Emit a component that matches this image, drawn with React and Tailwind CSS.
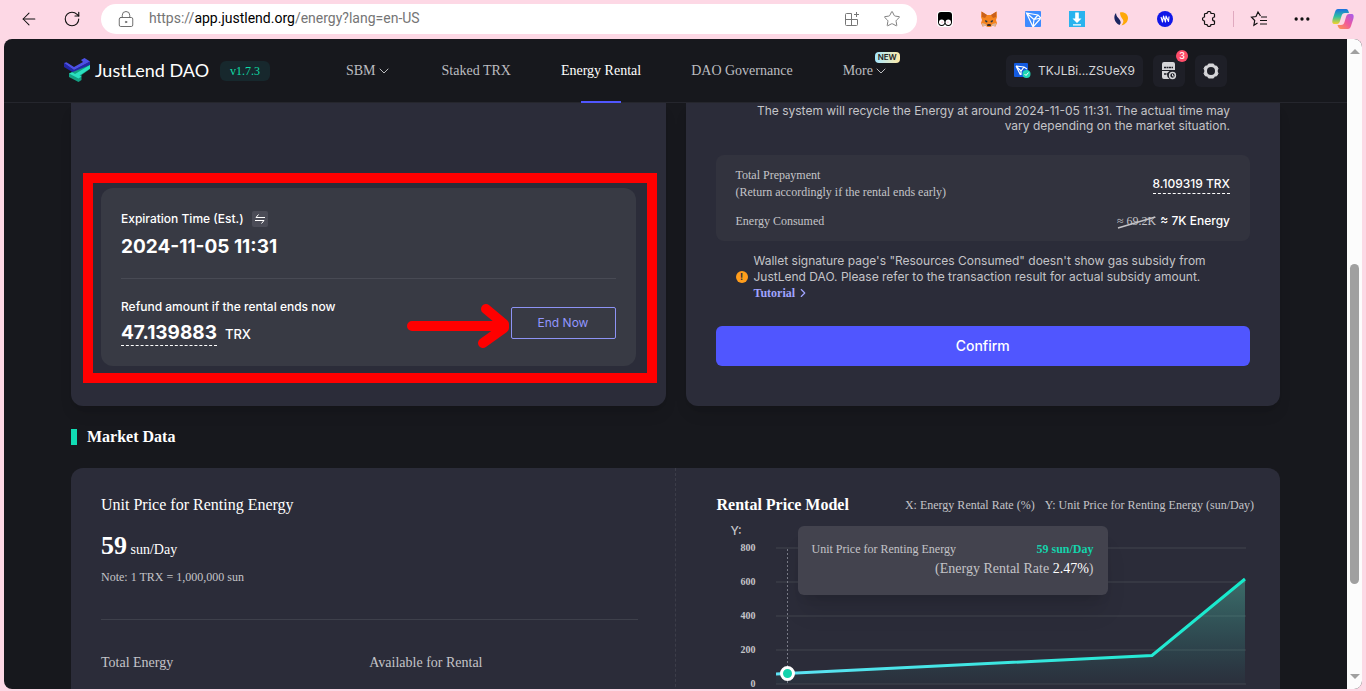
import React from 'react';
import {
  ArrowLeft,
  RotateCw,
  LockKeyhole,
  Star,
  ChevronDown,
  ChevronRight,
  Ellipsis,
} from 'lucide-react';

const PAGE_LINKS = [
  { label: 'SBM', chevron: true },
  { label: 'Staked TRX' },
  { label: 'Energy Rental', active: true },
  { label: 'DAO Governance' },
  { label: 'More', chevron: true, badge: 'NEW' },
];

const TICKS = [800, 600, 400, 200, 0];

const sans = "font-['Inter','Liberation_Sans',sans-serif]";

const AddAppIcon = () => (
  <svg width="18" height="18" viewBox="0 0 18 18" fill="none" stroke="#777" strokeWidth="1">
    <path d="M8.5 3.5h-5a1 1 0 0 0-1 1v10a1 1 0 0 0 1 1h10a1 1 0 0 0 1-1v-5M8.5 3.5v12M2.5 9.5h12M13.5 2v5M11 4.5h5" />
  </svg>
);

const Extensions = () => (
  <div className="flex items-center gap-7">
    <svg width="16" height="16" viewBox="0 0 16 16">
      <rect width="16" height="16" rx="4" fill="#fff" />
      <path d="M4 1h8a3 3 0 0 1 3 3v7H1V4a3 3 0 0 1 3-3z" fill="#000" />
      <circle cx="4.7" cy="11.3" r="3.6" fill="#000" />
      <circle cx="11.3" cy="11.3" r="3.6" fill="#000" />
      <circle cx="4.7" cy="11.3" r="2.7" fill="#fff" />
      <circle cx="11.3" cy="11.3" r="2.7" fill="#fff" />
      <circle cx="5.2" cy="11.3" r="1" fill="#fbd0de" />
      <circle cx="10.8" cy="11.3" r="1" fill="#fbd0de" />
    </svg>
    <svg width="16" height="16" viewBox="0 0 16 16">
      <path d="M.5.5 6 4h4L15.5.5 16 6l-1 3 1 3-1.5 3.5-3-.7L9.5 16h-3l-2-1.2-3 .7L0 12l1-3-1-3z" fill="#f5841f" />
      <path d="M.5.5 6 4 4 7 1 6zM15.5.5 10 4l2 3 3-1z" fill="#c9601c" />
      <path d="m4 9 2.5 1-.5 1.5L4.5 11zM12 9l-2.5 1 .5 1.5 1.5-.5z" fill="#233447" />
      <path d="M1 12l3.5 1 2 2.5-2-.7-3 .7zM15 12l-3.5 1-2 2.5 2-.7 3 .7z" fill="#d9b59b" />
      <path d="M6.5 13h3l.5 2H6z" fill="#3b2a22" />
    </svg>
    <svg width="16" height="16" viewBox="0 0 16 16">
      <rect width="16" height="16" rx="1" fill="#3d8bff" />
      <path d="M1.5 2 13 4l3 3-8 9zM1.5 2 9 8.5 8 16M9 8.5 13 4M9 8.5 16 7" fill="none" stroke="#fff" strokeWidth="1.2" />
    </svg>
    <svg width="16" height="16" viewBox="0 0 16 16">
      <rect width="16" height="16" fill="#29b3ee" />
      <path d="M6.2 1.5h3.6v6h2.7L8 12 3.5 7.5h2.7zM4 13.2h8v1.3H4z" fill="#fff" />
    </svg>
    <svg width="16" height="16" viewBox="0 0 16 16">
      <path d="M3 2C0 5 1 11.5 6.5 14c1.7-1.5 1.5-3.5 0-5.500S3 5 3 2z" fill="#1b2560" />
      <path d="M7 1.5c4-1 8 1.500 8 5.500 0 3.500-2.500 6.500-6.500 7.500 2-3 2.500-4.500 1-6.500C8 6 7 4 7 1.5z" fill="#fea808" />
    </svg>
    <svg width="16" height="16" viewBox="0 0 16 16">
      <circle cx="8" cy="8" r="8" fill="#1017e8" />
      <path d="M4 6l1.500 5 1-6 2 6 .5-6 2.500 5.500L12 5.500" stroke="#fff" strokeWidth="1.1" fill="none" strokeLinejoin="round" />
    </svg>
    <svg width="16" height="16" viewBox="0 0 16 16" fill="none" stroke="#111" strokeWidth="1.2">
      <path d="M6 2.5a2 2 0 0 1 4 0h2.5a1 1 0 0 1 1 1V6a1.9 1.9 0 1 0 0 4v2.5a1 1 0 0 1-1 1H10a2 2 0 0 1-4 0H4.5a1 1 0 0 1-1-1V10a2 2 0 0 1 0-4V3.5a1 1 0 0 1 1-1z" />
    </svg>
  </div>
);

const CopilotIcon = () => (
  <svg width="22" height="22" viewBox="0 0 22 22">
    <defs>
      <linearGradient id="cpA" x1="0" y1="0" x2="0" y2="1">
        <stop offset="0" stopColor="#1a6fe0" />
        <stop offset=".5" stopColor="#2fbfa0" />
        <stop offset="1" stopColor="#f5d328" />
      </linearGradient>
      <linearGradient id="cpB" x1="1" y1="0" x2="0" y2="1">
        <stop offset="0" stopColor="#a35cf0" />
        <stop offset=".5" stopColor="#f0589c" />
        <stop offset="1" stopColor="#ff9a4a" />
      </linearGradient>
    </defs>
    <path d="M6 1h8c2 0 2.5 2 3 4h-4c-2 0-3 1-3.500 3L8 13c-.5 2-1.500 3-3 3H3c-3 0-3-2-2.300-5L3 4c.6-2 1.500-3 3-3z" fill="url(#cpA)" />
    <path d="M16 21H9c-2 0-3-2-3.500-4H9c2 0 3-1 3.500-3L14 9c.5-2 1.500-3 3-3h2c3 0 3 2 2.300 5L19 18c-.6 2-1.500 3-3 3z" fill="url(#cpB)" />
  </svg>
);

const BrowserBar = () => (
  <div className="flex h-[39px] shrink-0 items-center pr-3 pb-[2px] pl-[19px] text-[#111]">
    <button aria-label="Back"><ArrowLeft className="h-5 w-5" strokeWidth={1.25} /></button>
    <button aria-label="Reload" className="ml-6"><RotateCw className="h-[18px] w-[18px]" strokeWidth={1.5} /></button>
    <div className="ml-5 flex h-[30px] flex-1 items-center rounded-full bg-white px-4">
      <LockKeyhole className="h-[18px] w-[18px] text-[#666]" strokeWidth={1.25} />
      <p className="ml-[14px] flex-1 font-['Roboto',sans-serif] text-[14px] text-[#757575]">
        https://<span className="text-black">app.justlend.org</span>/energy?lang=en-US
      </p>
      <button aria-label="Install app"><AddAppIcon /></button>
      <button aria-label="Favourite" className="ml-[22px]"><Star className="h-[18px] w-[18px] text-[#777]" strokeWidth={1.25} /></button>
    </div>
    <div className="ml-5"><Extensions /></div>
    <span className="mx-4 h-4 w-px bg-[#e0a9bf]" />
    <button aria-label="Favourites list">
      <svg width="18" height="18" viewBox="0 0 18 18" fill="none" stroke="#111" strokeWidth="1.2">
        <path d="M10.5 6 8 2 6 6.5l-4.5.7 3.2 3.3-.8 4.7L7.5 13M11 7h6M10 10.5h7M10 14h7" />
      </svg>
    </button>
    <button aria-label="Settings and more" className="ml-6"><Ellipsis className="h-5 w-5" /></button>
    <button aria-label="Copilot" className="ml-5"><CopilotIcon /></button>
  </div>
);

const Logo = () => (
  <div className="flex w-[151px] items-center gap-1 text-white">
    <svg width="27" height="25" viewBox="0 0 27 25" className="shrink-0">
      <path d="M0 5 10 12 26 3.5V7L10 15 0 9z" fill="#2226a8" />
      <path d="M0 5l2.500-.8L10 9l9-5-2-2L20.500 0 26 3.500 10 12z" fill="#4c50e6" />
      <path d="M5 15.500 26 7v4l-8.500 6v5l-3 2L5 19z" fill="#13a084" />
      <path d="M5 15.500l3-1.200 3 1.700L26 7v3.500L15.500 17.500l2 1-3 2z" fill="#2be0c0" />
    </svg>
    <span className="font-['Lato',sans-serif] text-[18px] whitespace-nowrap">JustLend DAO</span>
  </div>
);

const Header = () => (
  <header className="flex h-16 shrink-0 items-center border-b border-[#25262d] pr-[120px] pl-[60px] font-['Liberation_Serif',serif]">
    <Logo />
    <span className="ml-[5px] rounded-md bg-[#17282d] px-[10px] text-[12px] leading-5 text-[#0fdda7]">v1.7.3</span>
    <nav className="ml-[76px] flex h-full flex-1 items-center gap-[50px] text-[14px]">
      {PAGE_LINKS.map((link) => (
        <a
          key={link.label}
          href="#"
          className={link.active
            ? 'relative flex h-full items-center text-white'
            : 'relative flex h-full items-center text-[#bcbdc0]'}
        >
          {link.label}
          {link.chevron && <ChevronDown className="h-4 w-4" strokeWidth={1.5} />}
          {link.badge && (
            <span className={`absolute top-[13px] left-8 rounded-sm bg-linear-to-r from-[#a3e6ff] to-[#ffe9a3] px-[3px] text-[8px] leading-[11px] font-semibold text-[#222] ${sans}`}>
              {link.badge}
            </span>
          )}
          {link.active && <span className="absolute -bottom-px left-1/2 h-[2px] w-10 -translate-x-1/2 bg-[#5056ff]" />}
        </a>
      ))}
    </nav>
    <div className={`flex items-center gap-[10px] text-[12px] text-[#d5d5d8] ${sans}`}>
      <button className="flex h-8 items-center gap-[6px] rounded-md bg-[#1e1f27] px-2">
        <svg width="18" height="18" viewBox="0 0 18 18">
          <rect y="1" width="14" height="14" rx="1" fill="#135be0" />
          <path d="M2 4l8 1 3 2M2 4l4.5 9M2 4l5 5 3-4M7 9v4" fill="none" stroke="#fff" strokeWidth="1.2" />
          <circle cx="12.5" cy="12" r="4" fill="#20d7b5" />
          <path d="m10.5 12 1.5 1.5 2.5-3" fill="none" stroke="#fff" />
        </svg>
        TKJLBi...ZSUeX9
      </button>
      <button aria-label="Transactions" className="relative flex h-8 w-8 items-center justify-center rounded-md bg-[#1e1f27]">
        <svg width="16" height="18" viewBox="0 0 16 18">
          <path d="M3 0h9a2 2 0 0 1 2 2v6H1V2a2 2 0 0 1 2-2zM1 9h7.5a4.5 4.5 0 0 0 0 8H3a2 2 0 0 1-2-2z" fill="#d5d5d8" />
          <path d="M3 5.5h9M3 12h4" stroke="#1e1f27" strokeWidth="1.5" strokeDasharray="2 .5" />
          <circle cx="11.5" cy="13.5" r="2.9" fill="none" stroke="#d5d5d8" strokeWidth="1.5" />
          <path d="M11.5 12v2H13" stroke="#d5d5d8" fill="none" />
        </svg>
        <span className="absolute -top-[5px] -right-[3px] h-3 w-3 rounded-full bg-[#ff4d69] text-[9px] leading-3 font-medium text-white">3</span>
      </button>
      <button aria-label="Settings" className="flex h-8 w-8 items-center justify-center rounded-md bg-[#1e1f27]">
        <svg width="18" height="18" viewBox="0 0 18 18" strokeLinejoin="round">
          <path d="M6.5 2h5l1 2h2L16 6.5 15 9l1 2.500L14.500 14h-2l-1 2h-5l-1-2h-2L2 11.500 3 9 2 6.500 3.500 4h2z" fill="#d5d5d8" stroke="#d5d5d8" />
          <circle cx="9" cy="9" r="4" fill="#1e1f27" />
        </svg>
      </button>
    </div>
  </header>
);

const RentalCard = () => (
  <section className="relative flex-1 rounded-b-xl bg-[#2b2c39] px-[30px] pt-[85px] pb-10 shadow-lg">
    <div className={`rounded-xl bg-[#383a44] px-5 pt-[23px] pb-5 text-[12px] font-medium text-white ${sans}`}>
      <div className="flex items-center gap-2 leading-4">
        Expiration Time (Est.)
        <button aria-label="Switch time format" className="flex h-4 w-4 items-center justify-center rounded-xs bg-[#4b4c57]">
          <svg width="12" height="12" viewBox="0 0 12 12" fill="none" stroke="#fff">
            <path d="M4.5 1.500 2 4.500h9M1 7.500h9L7.500 10.500" />
          </svg>
        </button>
      </div>
      <p className="mt-2 text-[19px] leading-6 font-bold">2024-11-05 11:31</p>
      <hr className="mt-[19px] mb-5 border-[#484a54]" />
      <div className="flex items-center justify-between">
        <div>
          <p className="leading-4">Refund amount if the rental ends now</p>
          <p className="mt-[6px] flex items-end gap-2 text-[13px] leading-6">
            <span className="border-b border-dashed text-[19px] font-bold">47.139883</span> TRX
          </p>
        </div>
        <button className="h-8 w-[105px] rounded-xs border border-[#8d93f5] font-normal text-[#9296ff]">End Now</button>
      </div>
    </div>
    {/* callout around the active rental */}
    <div className="pointer-events-none absolute top-[70px] right-[9px] left-3 h-[210px] border-[10px] border-[#ff0000]" />
    <svg className="pointer-events-none absolute top-[200px] right-[156px]" width="104" height="46" viewBox="0 0 104 46">
      <path d="M6 23h92M80 6l18 15v4L77 40" fill="none" stroke="#f00" strokeWidth="10" strokeLinecap="round" strokeLinejoin="round" />
    </svg>
  </section>
);

const ConfirmCard = () => (
  <section className={`flex-1 rounded-b-xl bg-[#2b2c39] px-[30px] pb-9 text-[12px] text-[#c4c4c8] shadow-lg ${sans}`}>
    <p className="ml-5 pr-5 text-right leading-[15px]">
      The system will recycle the Energy at around 2024-11-05 11:31. The actual time may
      vary depending on the market situation.
    </p>
    <dl className="mt-[22px] rounded-lg bg-[#32333e] px-5 py-3">
      <div className="flex items-center justify-between">
        <dt className="font-['Liberation_Serif',serif] leading-[17px]">
          Total Prepayment<br />(Return accordingly if the rental ends early)
        </dt>
        <dd className="border-b border-dashed border-white leading-[18px] font-medium text-white">8.109319 TRX</dd>
      </div>
      <div className="mt-3 flex items-center justify-between leading-4">
        <dt className="font-['Liberation_Serif',serif]">Energy Consumed</dt>
        <dd className="flex gap-1 font-medium text-white">
          <span className="relative font-['Liberation_Serif',serif] font-normal text-[#c4c4c8]">
            ≈ 69.2K
            <svg className="absolute inset-0 h-full w-full" viewBox="0 0 40 16" preserveAspectRatio="none">
              <path d="M1 15 39 4" stroke="#c4c4c8" strokeWidth="1.5" />
            </svg>
          </span>
          ≈ 7K Energy
        </dd>
      </div>
    </dl>
    <div className="mt-3 flex items-center gap-[6px] px-5">
      <span className="flex h-3 w-3 shrink-0 items-center justify-center rounded-full bg-[#ff9d1c] text-[9px] font-bold text-[#2b2c39]">!</span>
      <p className="leading-4">
        Wallet signature page's "Resources Consumed" doesn't show gas subsidy from<br />
        JustLend DAO. Please refer to the transaction result for actual subsidy amount.<br />
        <a href="#" className="inline-flex items-center font-['Liberation_Serif',serif] font-bold text-[#a0a4ff]">
          Tutorial <ChevronRight className="ml-px h-[14px] w-[14px]" />
        </a>
      </p>
    </div>
    <button className="mt-[25px] h-10 w-full rounded-md bg-[#5056ff] text-[14px] leading-5 font-medium text-white">Confirm</button>
  </section>
);

const PriceChart = () => (
  <div className="relative mt-[7px]">
    <p className={`ml-[14px] text-[12px] leading-4 font-medium ${sans}`}>Y:</p>
    <div className="flex">
      <div className="mt-[3px] w-[39px] text-right text-[10px] font-bold">
        {TICKS.map((tick) => <p key={tick} className="h-[34px] leading-3">{tick}</p>)}
      </div>
      <svg className="ml-5 h-[150px] min-w-0 flex-1" viewBox="0 0 478 150" preserveAspectRatio="xMinYMin meet">
        <defs>
          <linearGradient id="area" x1="0" y1="0" x2="0" y2="1">
            <stop offset="0" stopColor="#5ce0c0" stopOpacity=".36" />
            <stop offset="1" stopColor="#2bd0c0" stopOpacity=".02" />
          </linearGradient>
          <linearGradient id="line" x1="0" y1="0" x2="1" y2="0">
            <stop offset="0" stopColor="#5fe3f5" />
            <stop offset="1" stopColor="#15eacb" />
          </linearGradient>
        </defs>
        {TICKS.map((tick, i) => (
          <path key={tick} d={`M0 ${9 + i * 34}h470`} stroke="#43454f" />
        ))}
        <path d="M11.5 10v136" stroke="#777985" strokeDasharray="2 2" />
        <path d="M0 135 376 116.5 469 40v105H0z" fill="url(#area)" />
        <path d="M0 135 376 116.5 469 40" fill="none" stroke="url(#line)" strokeWidth="3" />
        <circle cx="11.5" cy="134.5" r="6" fill="#14d3ac" stroke="#fff" strokeWidth="3" />
      </svg>
    </div>
    <div className="absolute top-[3px] left-[81px] w-[310px] rounded-md bg-[#43434e] px-[14px] pt-[14px] pb-[15px] shadow-xl">
      <p className="flex justify-between text-[12px] leading-[18px]">
        Unit Price for Renting Energy <strong className="text-[#14d3ac]">59 sun/Day</strong>
      </p>
      <p className="text-right text-[14px] leading-[22px]">(Energy Rental Rate <span className="text-white">2.47%</span>)</p>
    </div>
  </div>
);

const MarketData = () => (
  <div className="font-['Liberation_Serif',serif]">
    <h2 className="mt-5 flex items-center gap-[10px] text-[16px] leading-[22px] font-bold text-white">
      <span className="h-4 w-[6px] bg-[#10dcb4]" />Market Data
    </h2>
    <section className="mt-5 flex rounded-t-xl bg-[#2b2c39] pb-10 text-[#c4c4c8]">
      <div className="w-1/2 border-r border-dashed border-[#3c3d49] px-[30px] pt-[26px] pr-[37px] text-[14px]">
        <h3 className="text-[16px] leading-[22px] text-white">Unit Price for Renting Energy</h3>
        <p className="mt-4 leading-7 text-white"><strong className="text-[26px]">59</strong> sun/Day</p>
        <p className="mt-1 text-[12px] leading-[18px]">Note: 1 TRX = 1,000,000 sun</p>
        <hr className="mt-[33px] border-[#3e404b]" />
        <div className="mt-[33px] grid grid-cols-2 leading-5">
          <p>Total Energy</p>
          <p>Available for Rental</p>
        </div>
      </div>
      <div className="w-1/2 pt-[26px] pr-[26px] pl-[41px]">
        <div className="flex items-center justify-between leading-[22px]">
          <h3 className="text-[16px] font-bold text-white">Rental Price Model</h3>
          <p className="flex gap-[10px] text-[12px]">
            <span>X: Energy Rental Rate (%)</span>
            <span>Y: Unit Price for Renting Energy (sun/Day)</span>
          </p>
        </div>
        <PriceChart />
      </div>
    </section>
  </div>
);

const Scrollbar = () => (
  <div className="flex w-[15px] shrink-0 flex-col items-center bg-[#fcfcfc] py-[10px]">
    <span className="border-x-[5px] border-b-[5px] border-x-transparent border-b-[#a0a0a0]" />
    <span className="flex-[210_1_0]" />
    <span className="w-[9px] flex-[319_1_0] rounded-full bg-[#a0a0a0]" />
    <span className="flex-[90_1_0]" />
    <span className="border-x-[5px] border-t-[5px] border-x-transparent border-t-[#a0a0a0]" />
  </div>
);

const App = () => {
  return (
    <div className="flex h-screen flex-col overflow-hidden bg-[#fdd8e5]">
      <BrowserBar />
      <div className="mr-1 mb-[2px] ml-1 flex min-h-0 flex-1 overflow-hidden rounded-lg bg-[#17181d]">
        <div className="flex min-w-0 flex-1 flex-col">
          <Header />
          <main className="min-h-0 flex-1 overflow-hidden px-[67px]">
            <div className="flex gap-5">
              <RentalCard />
              <ConfirmCard />
            </div>
            <MarketData />
          </main>
        </div>
        <Scrollbar />
      </div>
    </div>
  );
};

export default App;
